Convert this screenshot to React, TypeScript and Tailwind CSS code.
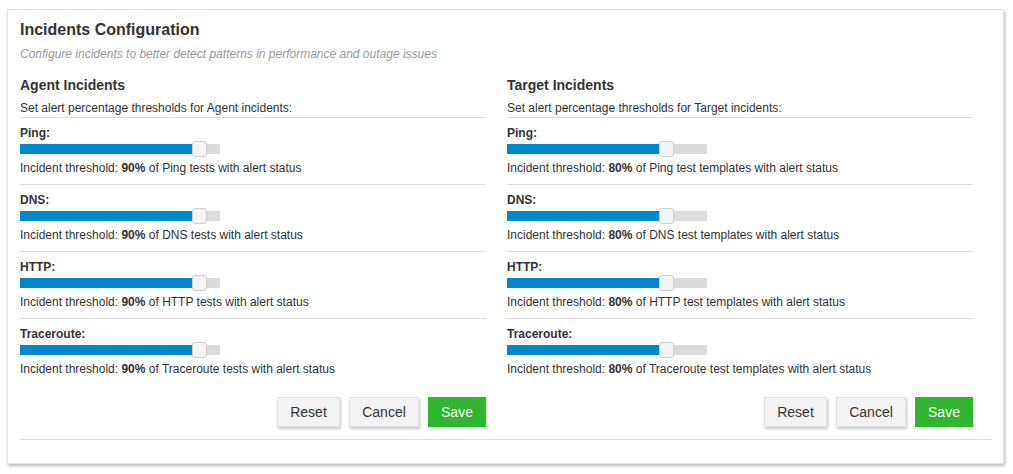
import React from "react";

const tests = ["Ping", "DNS", "HTTP", "Traceroute"];

function Slider({ value }: { value: number }) {
  return (
    <div className="relative w-[200px] h-[15px]">
      <div className="absolute left-0 right-0 top-[3px] h-[10px] bg-[#dcdcdc]" />
      <div className="absolute left-0 top-[3px] h-[10px] bg-[#0088cc]" style={{ width: `${value * 2}px` }} />
      <div
        className="absolute top-0 w-[15px] h-[16px] rounded-[3px] bg-[#f4f4f4] border border-[#cfcfcf]"
        style={{ left: `${value * 2 - 8}px` }}
      />
    </div>
  );
}

function Column({ title, kind, value, suffix }: { title: string; kind: string; value: number; suffix: string }) {
  return (
    <div className="w-[466px]">
      <div className="text-[14px] leading-[18px] font-bold text-[#333]">{title}</div>
      <div className="mt-[6px] text-[12px] leading-[16px] text-[#333] pb-[1px] border-b border-[#dedede]">
        Set alert percentage thresholds for {kind} incidents:
      </div>
      {tests.map((t, i) => (
        <div key={t} className={`pt-[7px] ${i < 3 ? "pb-[8px] border-b border-[#dedede]" : ""}`}>
          <div className="text-[12px] leading-[16px] font-bold text-[#333]">{t}:</div>
          <Slider value={value} />
          <div className="mt-[4px] text-[12px] leading-[16px] text-[#333]">
            Incident threshold: <b>{value}%</b> of {t} {suffix} with alert status
          </div>
        </div>
      ))}
      <div className="mt-[20px] flex justify-end gap-[9px]">
        <button className="h-[30px] w-[63px] bg-[#f3f3f3] border border-[#e2e2e2] text-[14px] text-[#333] shadow-[1px_2px_3px_rgba(0,0,0,0.22)]">
          Reset
        </button>
        <button className="h-[30px] w-[70px] bg-[#f3f3f3] border border-[#e2e2e2] text-[14px] text-[#333] shadow-[1px_2px_3px_rgba(0,0,0,0.22)]">
          Cancel
        </button>
        <button className="h-[30px] w-[58px] bg-[#2fb52f] text-[14px] text-white shadow-[1px_1px_2px_rgba(0,0,0,0.15)]">
          Save
        </button>
      </div>
    </div>
  );
}

export default function App() {
  return (
    <div className="w-[1013px] h-[474px] bg-white pt-[9px] pl-[7px]" style={{ fontFamily: '"Liberation Sans", Arial, sans-serif' }}>
      <div className="w-[997px] h-[455px] bg-white border border-[#e3e3e3] shadow-[1px_2px_3px_rgba(0,0,0,0.28)] pl-[12px] pr-[11px] pt-[10px]">
        <div className="text-[16px] leading-[20px] font-bold text-[#333]">Incidents Configuration</div>
        <div className="mt-[6px] text-[12px] leading-[16px] italic text-[#999]">
          Configure incidents to better detect patterns in performance and outage issues
        </div>
        <div className="mt-[14px] flex gap-[21px]">
          <Column title="Agent Incidents" kind="Agent" value={90} suffix="tests" />
          <Column title="Target Incidents" kind="Target" value={80} suffix="test templates" />
        </div>
        <div className="mt-[12px] border-t border-[#dedede]" />
      </div>
    </div>
  );
}
